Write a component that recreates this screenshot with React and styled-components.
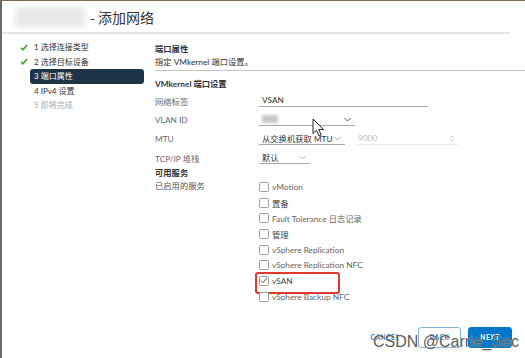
import React from 'react';
import styled, { createGlobalStyle } from 'styled-components';

const GlobalStyle = createGlobalStyle`
  html, body {
    margin: 0;
    padding: 0;
    background: #fff;
  }
  body {
    font-family: Lato, "Noto Sans CJK SC", sans-serif;
    color: #333;
  }
  * { box-sizing: border-box; }
`;

const Page = styled.div`
  position: relative;
  width: 525px;
  height: 358px;
  display: flex;
  flex-direction: column;
  border-left: 2px solid #6a6a6a;
  border-top: 1px solid #7b6a57;
  overflow: hidden;
  background: #fff;
`;

const Header = styled.div`
  display: flex;
  align-items: center;
  height: 33px;
  margin-right: 15px;
  padding-left: 13px;
  border-bottom: 2px solid #e4e4e4;
`;

const BlurredName = styled.div`
  width: 70px;
  height: 20px;
  margin-right: 5px;
  background: #e8e8e8;
  filter: blur(3px);
`;

const Title = styled.h1`
  margin: 0;
  font-size: 14px;
  font-weight: 400;
  color: #333;
  font-family: "Noto Sans CJK SC", sans-serif;
`;

const Body = styled.div`
  display: flex;
  flex: 1;
`;

const Nav = styled.nav`
  width: 153px;
  padding-top: 6px;
`;

const NavRow = styled.div`
  display: flex;
  align-items: center;
  height: 14.5px;
`;

const CheckSlot = styled.div`
  width: 28px;
  display: flex;
  justify-content: flex-end;
  padding-right: 2px;
`;

const NavItem = styled.div`
  width: 114px;
  height: 14.5px;
  line-height: 14.5px;
  padding-left: 4px;
  border-radius: 3px;
  font-size: 8px;
  background: ${(p) => (p.$active ? '#1f3547' : 'transparent')};
  color: ${(p) => (p.$active ? '#fff' : p.$disabled ? '#aaa' : '#333')};
`;

const Content = styled.div`
  flex: 1;
  padding-top: 9px;
  font-size: 8.3px;
`;

const SectionTitle = styled.div`
  font-weight: 700;
  line-height: 13px;
  color: #333;
`;

const Desc = styled.div`
  line-height: 13px;
  color: #333;
`;

const Divider = styled.div`
  height: 1px;
  background: #c4c4c4;
  margin: 1px 0 7px;
`;

const FormRow = styled.div`
  display: grid;
  grid-template-columns: 104px 1fr;
  align-items: center;
  height: ${(p) => p.$h || 19}px;
`;

const Label = styled.div`
  color: #6a6a6a;
`;

const FieldLine = styled.div`
  display: flex;
  align-items: center;
`;

const TextInput = styled.div`
  width: ${(p) => p.$w}px;
  height: 13px;
  line-height: 12px;
  padding-left: 3px;
  padding-right: 4px;
  margin-left: ${(p) => p.$ml || 0}px;
  border-bottom: 1px solid ${(p) => (p.$muted ? '#ececec' : '#a8a8a8')};
  color: ${(p) => (p.$muted ? '#bbb' : '#333')};
  display: flex;
  align-items: center;
  justify-content: space-between;
`;

const Select = styled.div`
  width: ${(p) => p.$w}px;
  height: 13px;
  padding: 0 4px 0 3px;
  border-bottom: 1px solid #a8a8a8;
  display: flex;
  align-items: center;
  justify-content: space-between;
  color: #333;
`;

const BlurValue = styled.span`
  width: 16px;
  height: 8px;
  background: #c8c8c8;
  filter: blur(1.5px);
`;

const ServicesHead = styled.div`
  height: 12px;
  line-height: 12px;
  font-weight: 700;
  color: #333;
`;

const Services = styled.div`
  display: grid;
  grid-template-columns: 104px 1fr;
`;

const ServiceLabel = styled.div`
  height: 15.7px;
  line-height: 15.7px;
  color: #555;
`;

const CheckList = styled.div`
  display: flex;
  flex-direction: column;
`;

const CheckRow = styled.div`
  position: relative;
  display: flex;
  align-items: center;
  gap: 3px;
  height: 15.7px;
  color: ${(p) => (p.$dim ? '#666' : '#444')};

  ${(p) =>
    p.$highlight &&
    `
    &::after {
      content: '';
      position: absolute;
      left: -4px;
      top: -1.5px;
      width: 81px;
      height: 18px;
      border: 2px solid #e3372b;
      border-radius: 3px;
    }
  `}
`;

const Box = styled.span`
  width: 10px;
  height: 10px;
  border: 1px solid #9d9d9d;
  border-radius: 1.5px;
  background: #fff;
  display: flex;
  align-items: center;
  justify-content: center;
`;

const Footer = styled.div`
  margin-top: auto;
  display: flex;
  justify-content: flex-end;
  align-items: center;
  padding: 0 13px 10px 0;
`;

const Button = styled.button`
  height: 21px;
  width: ${(p) => p.$w || 43}px;
  margin-left: ${(p) => p.$ml || 0}px;
  padding: 0;
  border-radius: 3px;
  font-family: Lato, sans-serif;
  font-size: 6.5px;
  font-weight: 700;
  letter-spacing: 0.6px;
  border: 1px solid ${(p) => (p.$variant === 'primary' ? '#0077c8' : p.$variant === 'outline' ? '#86b3dc' : 'transparent')};
  background: ${(p) => (p.$variant === 'primary' ? '#0077c8' : '#fff')};
  color: ${(p) => (p.$variant === 'primary' ? '#fff' : '#2c7cc0')};
`;

const Watermark = styled.div`
  position: absolute;
  left: 371px;
  top: 332px;
  font-family: "Liberation Sans", Arial, sans-serif;
  font-size: 16px;
  color: rgba(70, 70, 70, 0.9);
  text-shadow: 0 0 1px #fff;
  pointer-events: none;
`;

const Cursor = styled.svg`
  position: absolute;
  left: 310px;
  top: 117px;
`;

const Check = () => (
  <svg width="8" height="7" viewBox="0 0 8 7">
    <polyline points="1,3.8 3,5.8 7,1" fill="none" stroke="#4f9a2c" strokeWidth="1.6" />
  </svg>
);

const Chevron = ({ color = '#555' }) => (
  <svg width="7" height="5" viewBox="0 0 7 5">
    <polyline points="0.5,1 3.5,4 6.5,1" fill="none" stroke={color} strokeWidth="1" />
  </svg>
);

const Spinner = () => (
  <svg width="4" height="7" viewBox="0 0 4 7">
    <polyline points="0.5,2.5 2,1 3.5,2.5" fill="none" stroke="#bbb" strokeWidth="0.8" />
    <polyline points="0.5,4.5 2,6 3.5,4.5" fill="none" stroke="#bbb" strokeWidth="0.8" />
  </svg>
);

const steps = [
  { label: '1 选择连接类型', done: true },
  { label: '2 选择目标设备', done: true },
  { label: '3 端口属性', active: true },
  { label: '4 IPv4 设置' },
  { label: '5 即将完成', disabled: true },
];

const services = [
  { label: 'vMotion', dim: true },
  { label: '置备' },
  { label: 'Fault Tolerance 日志记录', dim: true },
  { label: '管理' },
  { label: 'vSphere Replication', dim: true },
  { label: 'vSphere Replication NFC', dim: true },
  { label: 'vSAN', checked: true, highlight: true },
  { label: 'vSphere Backup NFC', dim: true },
];

export default function App() {
  return (
    <>
      <GlobalStyle />
      <Page>
        <Header>
          <BlurredName />
          <Title>- 添加网络</Title>
        </Header>
        <Body>
          <Nav>
            {steps.map((s) => (
              <NavRow key={s.label}>
                <CheckSlot>{s.done && <Check />}</CheckSlot>
                <NavItem $active={s.active} $disabled={s.disabled}>
                  {s.label}
                </NavItem>
              </NavRow>
            ))}
          </Nav>
          <Content>
            <SectionTitle>端口属性</SectionTitle>
            <Desc>指定 VMkernel 端口设置。</Desc>
            <Divider />
            <SectionTitle>VMkernel 端口设置</SectionTitle>
            <FormRow>
              <Label>网络标签</Label>
              <FieldLine>
                <TextInput $w={169}>VSAN</TextInput>
              </FieldLine>
            </FormRow>
            <FormRow>
              <Label>VLAN ID</Label>
              <FieldLine>
                <Select $w={96}>
                  <BlurValue />
                  <Chevron />
                </Select>
              </FieldLine>
            </FormRow>
            <FormRow>
              <Label>MTU</Label>
              <FieldLine>
                <Select $w={86}>
                  <span>从交换机获取 MTU</span>
                  <Chevron color="#aaa" />
                </Select>
                <TextInput $w={103} $ml={10} $muted>
                  <span>9000</span>
                  <Spinner />
                </TextInput>
              </FieldLine>
            </FormRow>
            <FormRow>
              <Label>TCP/IP 堆栈</Label>
              <FieldLine>
                <Select $w={51}>
                  <span>默认</span>
                  <Chevron color="#aaa" />
                </Select>
              </FieldLine>
            </FormRow>
            <ServicesHead>可用服务</ServicesHead>
            <Services>
              <ServiceLabel>已启用的服务</ServiceLabel>
              <CheckList>
                {services.map((s) => (
                  <CheckRow key={s.label} $dim={s.dim} $highlight={s.highlight}>
                    <Box>
                      {s.checked && (
                        <svg width="8" height="7" viewBox="0 0 8 7">
                          <polyline points="1,3.6 3,5.6 7,1" fill="none" stroke="#555" strokeWidth="1" />
                        </svg>
                      )}
                    </Box>
                    {s.label}
                  </CheckRow>
                ))}
              </CheckList>
            </Services>
          </Content>
        </Body>
        <Footer>
          <Button $variant="text" $w={34}>CANCEL</Button>
          <Button $variant="outline" $w={43} $ml={16}>BACK</Button>
          <Button $variant="primary" $w={44} $ml={7}>NEXT</Button>
        </Footer>
        <Watermark>CSDN @Carrie_Sec</Watermark>
        <Cursor width="13" height="20" viewBox="0 0 13 20">
          <path d="M1 1 L1 15.5 L4.5 12.3 L7 18 L9.2 17 L6.8 11.5 L11.5 11.5 Z" fill="#fff" stroke="#222" strokeWidth="1" strokeLinejoin="round" />
        </Cursor>
      </Page>
    </>
  );
}
